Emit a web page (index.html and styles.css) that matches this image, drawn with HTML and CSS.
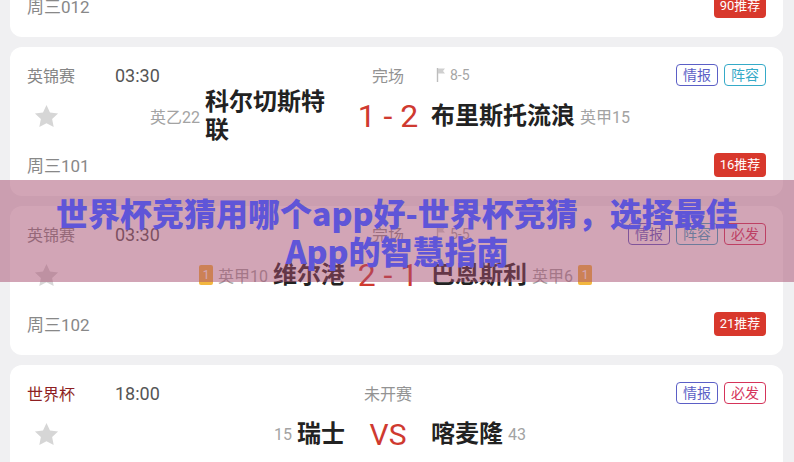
FILE: index.html
```html
<!DOCTYPE html>
<html lang="zh-CN">
<head>
  <meta charset="UTF-8" />
  <meta name="viewport" content="width=device-width, initial-scale=1.0" />
  <title>世界杯竞猜用哪个app好</title>
  <link rel="stylesheet" href="styles.css">
</head>
<body>
  <div class="list">
    <div class="card card-tail">
      <div class="foot">
        <span class="no">周三012</span>
        <span class="hot">90推荐</span>
      </div>
    </div>

    <div class="card">
      <div class="head">
        <div class="meta">
          <span class="league">英锦赛</span>
          <span class="time">03:30</span>
        </div>
        <div class="state">完场</div>
        <div class="extra">
          <span class="half"><svg class="flag" viewBox="0 0 10 16"><path d="M1.5 1v14" stroke="#bdbdbd" stroke-width="1.4"/><path d="M2 1.5h7l-2 2.5 2 2.5H2z" fill="#cfcfcf"/></svg>8-5</span>
          <span class="tags">
            <span class="tag info">情报</span>
            <span class="tag lineup">阵容</span>
          </span>
        </div>
      </div>
      <div class="match">
        <div class="home">
          <svg class="star" viewBox="0 0 24 24"><path d="M12 1.8l3.1 6.6 7.2.9-5.3 5 1.4 7.1L12 17.9l-6.4 3.5 1.4-7.1-5.3-5 7.2-.9z" fill="#d6d6d6"/></svg>
          <div class="side">
            <span class="rank">英乙22</span>
            <span class="team">科尔切斯特联</span>
          </div>
        </div>
        <div class="score">1 - 2</div>
        <div class="away">
          <span class="team">布里斯托流浪</span>
          <span class="rank">英甲15</span>
        </div>
      </div>
      <div class="foot">
        <span class="no">周三101</span>
        <span class="hot">16推荐</span>
      </div>
    </div>

    <div class="card">
      <div class="head">
        <div class="meta">
          <span class="league">英锦赛</span>
          <span class="time">03:30</span>
        </div>
        <div class="state">完场</div>
        <div class="extra">
          <span class="half"><svg class="flag" viewBox="0 0 10 16"><path d="M1.5 1v14" stroke="#bdbdbd" stroke-width="1.4"/><path d="M2 1.5h7l-2 2.5 2 2.5H2z" fill="#cfcfcf"/></svg>5-5</span>
          <span class="tags">
            <span class="tag info">情报</span>
            <span class="tag lineup">阵容</span>
            <span class="tag must">必发</span>
          </span>
        </div>
      </div>
      <div class="match">
        <div class="home">
          <svg class="star" viewBox="0 0 24 24"><path d="M12 1.8l3.1 6.6 7.2.9-5.3 5 1.4 7.1L12 17.9l-6.4 3.5 1.4-7.1-5.3-5 7.2-.9z" fill="#d6d6d6"/></svg>
          <div class="side">
            <span class="pos">1</span>
            <span class="rank">英甲10</span>
            <span class="team">维尔港</span>
          </div>
        </div>
        <div class="score">2 - 1</div>
        <div class="away">
          <span class="team">巴恩斯利</span>
          <span class="rank">英甲6</span>
          <span class="pos">1</span>
        </div>
      </div>
      <div class="foot">
        <span class="no">周三102</span>
        <span class="hot">21推荐</span>
      </div>
    </div>

    <div class="card">
      <div class="head">
        <div class="meta">
          <span class="league cup">世界杯</span>
          <span class="time">18:00</span>
        </div>
        <div class="state">未开赛</div>
        <div class="extra">
          <span class="tags">
            <span class="tag info">情报</span>
            <span class="tag must">必发</span>
          </span>
        </div>
      </div>
      <div class="match">
        <div class="home">
          <svg class="star" viewBox="0 0 24 24"><path d="M12 1.8l3.1 6.6 7.2.9-5.3 5 1.4 7.1L12 17.9l-6.4 3.5 1.4-7.1-5.3-5 7.2-.9z" fill="#d6d6d6"/></svg>
          <div class="side">
            <span class="rank">15</span>
            <span class="team">瑞士</span>
          </div>
        </div>
        <div class="score vs">VS</div>
        <div class="away">
          <span class="team">喀麦隆</span>
          <span class="rank">43</span>
        </div>
      </div>
    </div>
  </div>

  <div class="banner">
    <h1>世界杯竞猜用哪个app好-世界杯竞猜，选择最佳App的智慧指南</h1>
  </div>
</body>
</html>
```

FILE: styles.css
```css
body {
  margin: 0;
  background: #f0f0f2;
  font-family: Roboto, "Noto Sans CJK SC", sans-serif;
  color: #222;
  overflow: hidden;
}
.list {
  display: flex;
  flex-direction: column;
  gap: 10px;
  margin: 0 11px 0 10px;
}
.card {
  background: #fff;
  border-radius: 12px;
  padding: 16px 17px 19px;
}
.card-tail {
  margin-top: -7px;
  padding-top: 0;
  border-radius: 0 0 12px 12px;
}

/* top line: league, kick-off, state, tags */
.head {
  display: grid;
  grid-template-columns: 318px 86px 1fr;
  align-items: center;
  height: 22px;
}
.meta {
  display: flex;
  align-items: center;
}
.league {
  width: 88px;
  font-size: 16px;
  color: #858585;
}
.league.cup {
  color: #8e1f22;
}
.time {
  font-size: 18px;
  color: #555;
}
.state {
  text-align: center;
  font-size: 16px;
  color: #939393;
}
.extra {
  display: flex;
  align-items: center;
}
.half {
  display: flex;
  align-items: center;
  gap: 4px;
  margin-left: 5px;
  font-size: 14px;
  color: #a5a5a5;
}
.flag {
  width: 10px;
  height: 16px;
}
.tags {
  display: flex;
  gap: 6px;
  margin-left: auto;
}
.tag {
  box-sizing: border-box;
  width: 42px;
  height: 22px;
  line-height: 20px;
  text-align: center;
  font-size: 14px;
  border: 1px solid;
  border-radius: 4px;
}
.info { color: #5b5fc6; }
.lineup { color: #35aac8; }
.must { color: #d5345a; }

/* teams and score */
.match {
  display: grid;
  grid-template-columns: 318px 86px 1fr;
  align-items: center;
  min-height: 56px;
  margin-top: 3px;
}
.home {
  display: flex;
  align-items: center;
  justify-content: space-between;
}
.star {
  width: 27px;
  height: 27px;
  margin-left: 6px;
}
.side,
.away {
  display: flex;
  align-items: center;
  gap: 5px;
}
.team {
  font-size: 24px;
  line-height: 28px;
  font-weight: 700;
  color: #222;
  white-space: nowrap;
}
.side .team {
  max-width: 140px;
  white-space: normal;
}
.rank {
  font-size: 16px;
  color: #a3a3a3;
}
.pos {
  width: 14px;
  height: 20px;
  line-height: 20px;
  text-align: center;
  font-size: 12px;
  color: #fff;
  background: #f3b73f;
  border-radius: 2px;
}
.score {
  text-align: center;
  font-size: 32px;
  color: #cf3a30;
  white-space: nowrap;
}
.score.vs {
  font-size: 30px;
}

/* bottom line: match number, tips badge */
.foot {
  display: flex;
  align-items: center;
  justify-content: space-between;
  margin-top: 8px;
}
.card-tail .foot {
  margin-top: 0;
}
.no {
  font-size: 17px;
  color: #888;
}
.hot {
  width: 52px;
  height: 24px;
  line-height: 24px;
  text-align: center;
  font-size: 13px;
  color: #fff;
  background: #d8382c;
  border-radius: 4px;
}

/* title strip across the list */
.banner {
  position: absolute;
  left: 0;
  right: 0;
  top: 180px;
  height: 102px;
  display: flex;
  align-items: center;
  justify-content: center;
  background: rgba(165, 75, 110, 0.5);
}
.banner h1 {
  max-width: 700px;
  margin: 0;
  text-align: center;
  font-family: "Noto Sans CJK SC", sans-serif;
  font-size: 32px;
  line-height: 38px;
  font-weight: 900;
  color: #5f55d8;
}
```
